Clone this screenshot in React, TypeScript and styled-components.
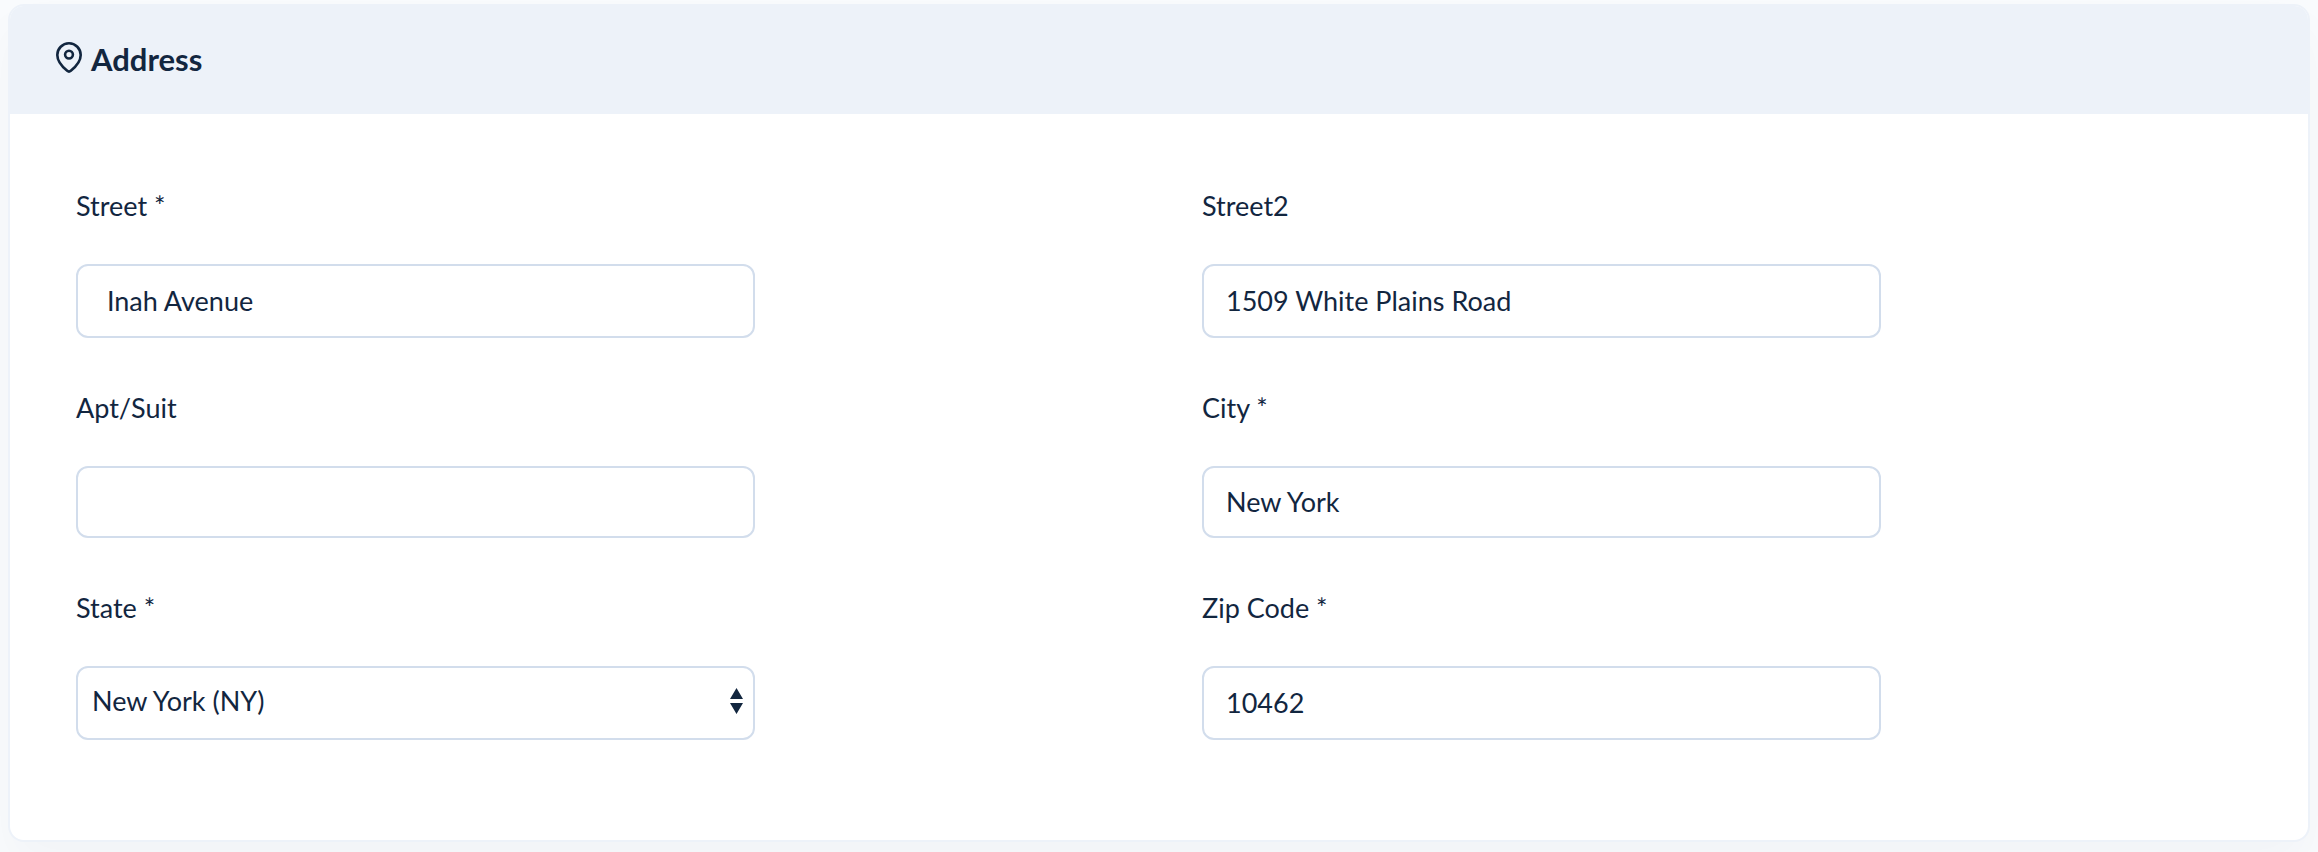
import React from "react";
import styled, { createGlobalStyle } from "styled-components";

const ink = "#12263f";
const line = "#d2ddec";
const tint = "#edf2f9";

const GlobalStyle = createGlobalStyle`
  *, *::before, *::after { box-sizing: border-box; }
  body {
    margin: 0;
    background: #f9fbfd;
    color: ${ink};
    font-family: Lato, "Liberation Sans", sans-serif;
    font-size: 27px;
    line-height: 32px;
  }
`;

const Page = styled.main`
  padding: 4px 8px 10px;
  overflow: hidden;
`;

const Card = styled.section`
  background: #fff;
  border: 2px solid ${tint};
  border-radius: 16px;
  box-shadow: 0 24px 48px rgba(18, 38, 63, 0.03);
`;

const CardHeader = styled.header`
  display: flex;
  align-items: center;
  gap: 9px;
  min-height: 108px;
  padding: 0 46px 2px;
  background: ${tint};
  border-radius: 14px 14px 0 0;
`;

const PinIcon = styled.svg`
  width: 26px;
  height: 31px;
  margin-bottom: 4px;
  fill: none;
  stroke: currentColor;
`;

const Title = styled.h2`
  margin: 0;
  font-size: 31px;
  font-weight: 700;
  line-height: 36px;
`;

const Fields = styled.form`
  display: grid;
  grid-template-columns: repeat(2, 1fr);
  gap: 54px 48px;
  padding: 76px 28px 100px 66px;
`;

const Field = styled.div`
  display: flex;
  flex-direction: column;
  align-items: flex-start;
  gap: 42px;
`;

const Label = styled.label`
  display: block;
`;

const Control = styled.div`
  position: relative;
  width: 63%;
`;

const Input = styled.input<{ $short?: boolean }>`
  display: block;
  width: 100%;
  height: ${(p) => (p.$short ? 72 : 74)}px;
  padding: 0 22px 2px;
  border: 2px solid ${line};
  border-radius: 12px;
  background: #fff;
  color: inherit;
  font: inherit;
`;

const Select = styled.select`
  display: block;
  width: 100%;
  height: 74px;
  padding: 0 40px 4px 14px;
  border: 2px solid ${line};
  border-radius: 12px;
  background: #fff;
  color: inherit;
  font: inherit;
  appearance: none;
`;

const Arrows = styled.svg`
  position: absolute;
  top: 22px;
  right: 12px;
  width: 13px;
  height: 26px;
  fill: currentColor;
  pointer-events: none;
`;

type TextFieldProps = { id: string; label: string; value?: string; required?: boolean; short?: boolean };

function TextField({ id, label, value = "", required, short }: TextFieldProps) {
  return (
    <Field>
      <Label htmlFor={id}>{label}{required && " *"}</Label>
      <Control>
        <Input id={id} name={id} type="text" defaultValue={value} required={required} $short={short} />
      </Control>
    </Field>
  );
}

export default function App() {
  return (
    <>
      <GlobalStyle />
      <Page>
        <Card aria-labelledby="address-title">
          <CardHeader>
            <PinIcon viewBox="0 0 26 31" strokeWidth="2.6" strokeLinejoin="round" aria-hidden="true">
              <path d="M13 1.3C6.500 1.300 1.300 6.500 1.300 13c0 7 5.200 12 9.900 15.800 1.200 1 2.400 1 3.600 0C19.500 25 24.700 20 24.700 13 24.700 6.500 19.500 1.300 13 1.300z" />
              <circle cx="13" cy="12.600" r="3.900" />
            </PinIcon>
            <Title id="address-title">Address</Title>
          </CardHeader>
          <Fields>
            <TextField id="street" label="Street" value=" Inah Avenue" required />
            <TextField id="street2" label="Street2" value="1509 White Plains Road" />
            <TextField id="apt" label="Apt/Suit" short />
            <TextField id="city" label="City" value="New York" required short />
            <Field>
              <Label htmlFor="state">State *</Label>
              <Control>
                <Select id="state" name="state" defaultValue="NY" required>
                  <option value="NY">New York (NY)</option>
                </Select>
                <Arrows viewBox="0 0 13 26" aria-hidden="true">
                  <path d="M6.500 0L13 11H0zM0 15h13L6.500 26z" />
                </Arrows>
              </Control>
            </Field>
            <TextField id="zip" label="Zip Code" value="10462" required />
          </Fields>
        </Card>
      </Page>
    </>
  );
}
